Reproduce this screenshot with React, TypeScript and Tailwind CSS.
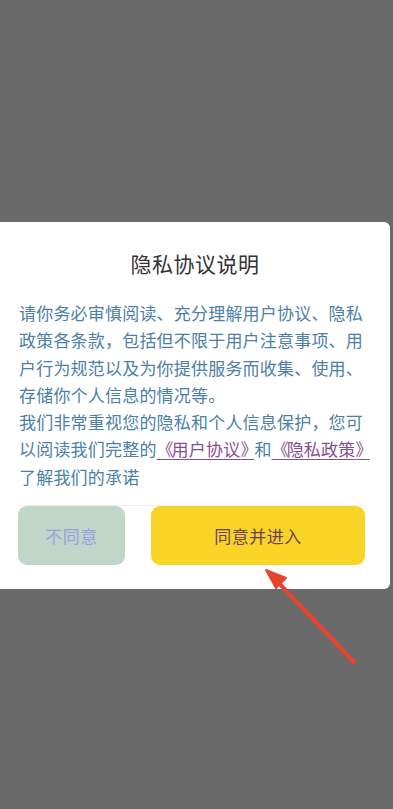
const cjk = { fontFamily: '"Noto Sans CJK SC", "Noto Sans", sans-serif' }

function Arrow() {
  return (
    <svg className="absolute left-0 top-0 pointer-events-none" width="393" height="809" viewBox="0 0 393 809">
      <line x1="354" y1="662" x2="274" y2="578" stroke="#e8432d" strokeWidth="4" strokeLinecap="round" />
      <polygon points="266,570 286,578 276,588" fill="#e8432d" stroke="#e8432d" strokeWidth="2" strokeLinejoin="round" />
    </svg>
  )
}

function Bracketed({ children }: { children: string }) {
  return (
    <span className="text-[#874e8f] underline underline-offset-[3px] decoration-1">
      <span className="tracking-[-2px]">《</span>
      {children}
      <span className="tracking-[-3px]">》</span>
    </span>
  )
}

export default function App() {
  return (
    <div className="relative w-[393px] h-[809px] bg-[#6a6a6a] overflow-hidden" style={cjk}>
      <div className="pt-[222px]">
        <div className="w-[390px] bg-white rounded-r-[6px] pt-[26px] pb-[24px]">
          <h2 className="text-center text-[21px] leading-[30px] tracking-[0.5px] text-[#333333] font-normal">
            隐私协议说明
          </h2>

          <div className="mt-[21px] pl-[19px] text-[17px] leading-[27.3px] tracking-[0.2px] text-[#4c80a8] whitespace-nowrap">
            <p>
              请你务必审慎阅读、充分理解用户协议、隐私
              <br />
              政策各条款，包括但不限于用户注意事项、用
              <br />
              户行为规范以及为你提供服务而收集、使用、
              <br />
              存储你个人信息的情况等。
            </p>
            <p>
              我们非常重视您的隐私和个人信息保护，您可
              <br />
              以阅读我们完整的<Bracketed>用户协议</Bracketed>和<Bracketed>隐私政策</Bracketed>
              <br />
              了解我们的承诺
            </p>
          </div>

          <div className="mt-[15px] ml-[18px] mr-[25px] border-t border-[#f0f0f0] flex gap-[26px]">
            <button className="w-[107px] h-[59px] rounded-[9px] bg-[#c0d6c8] text-[#9a9fe2] text-[17px] tracking-[0.5px]">
              不同意
            </button>
            <button className="flex-1 h-[59px] rounded-[9px] bg-[#f8d426] text-[#6d3f5c] text-[17px] tracking-[0.5px]">
              同意并进入
            </button>
          </div>
        </div>
      </div>
      <Arrow />
    </div>
  )
}
